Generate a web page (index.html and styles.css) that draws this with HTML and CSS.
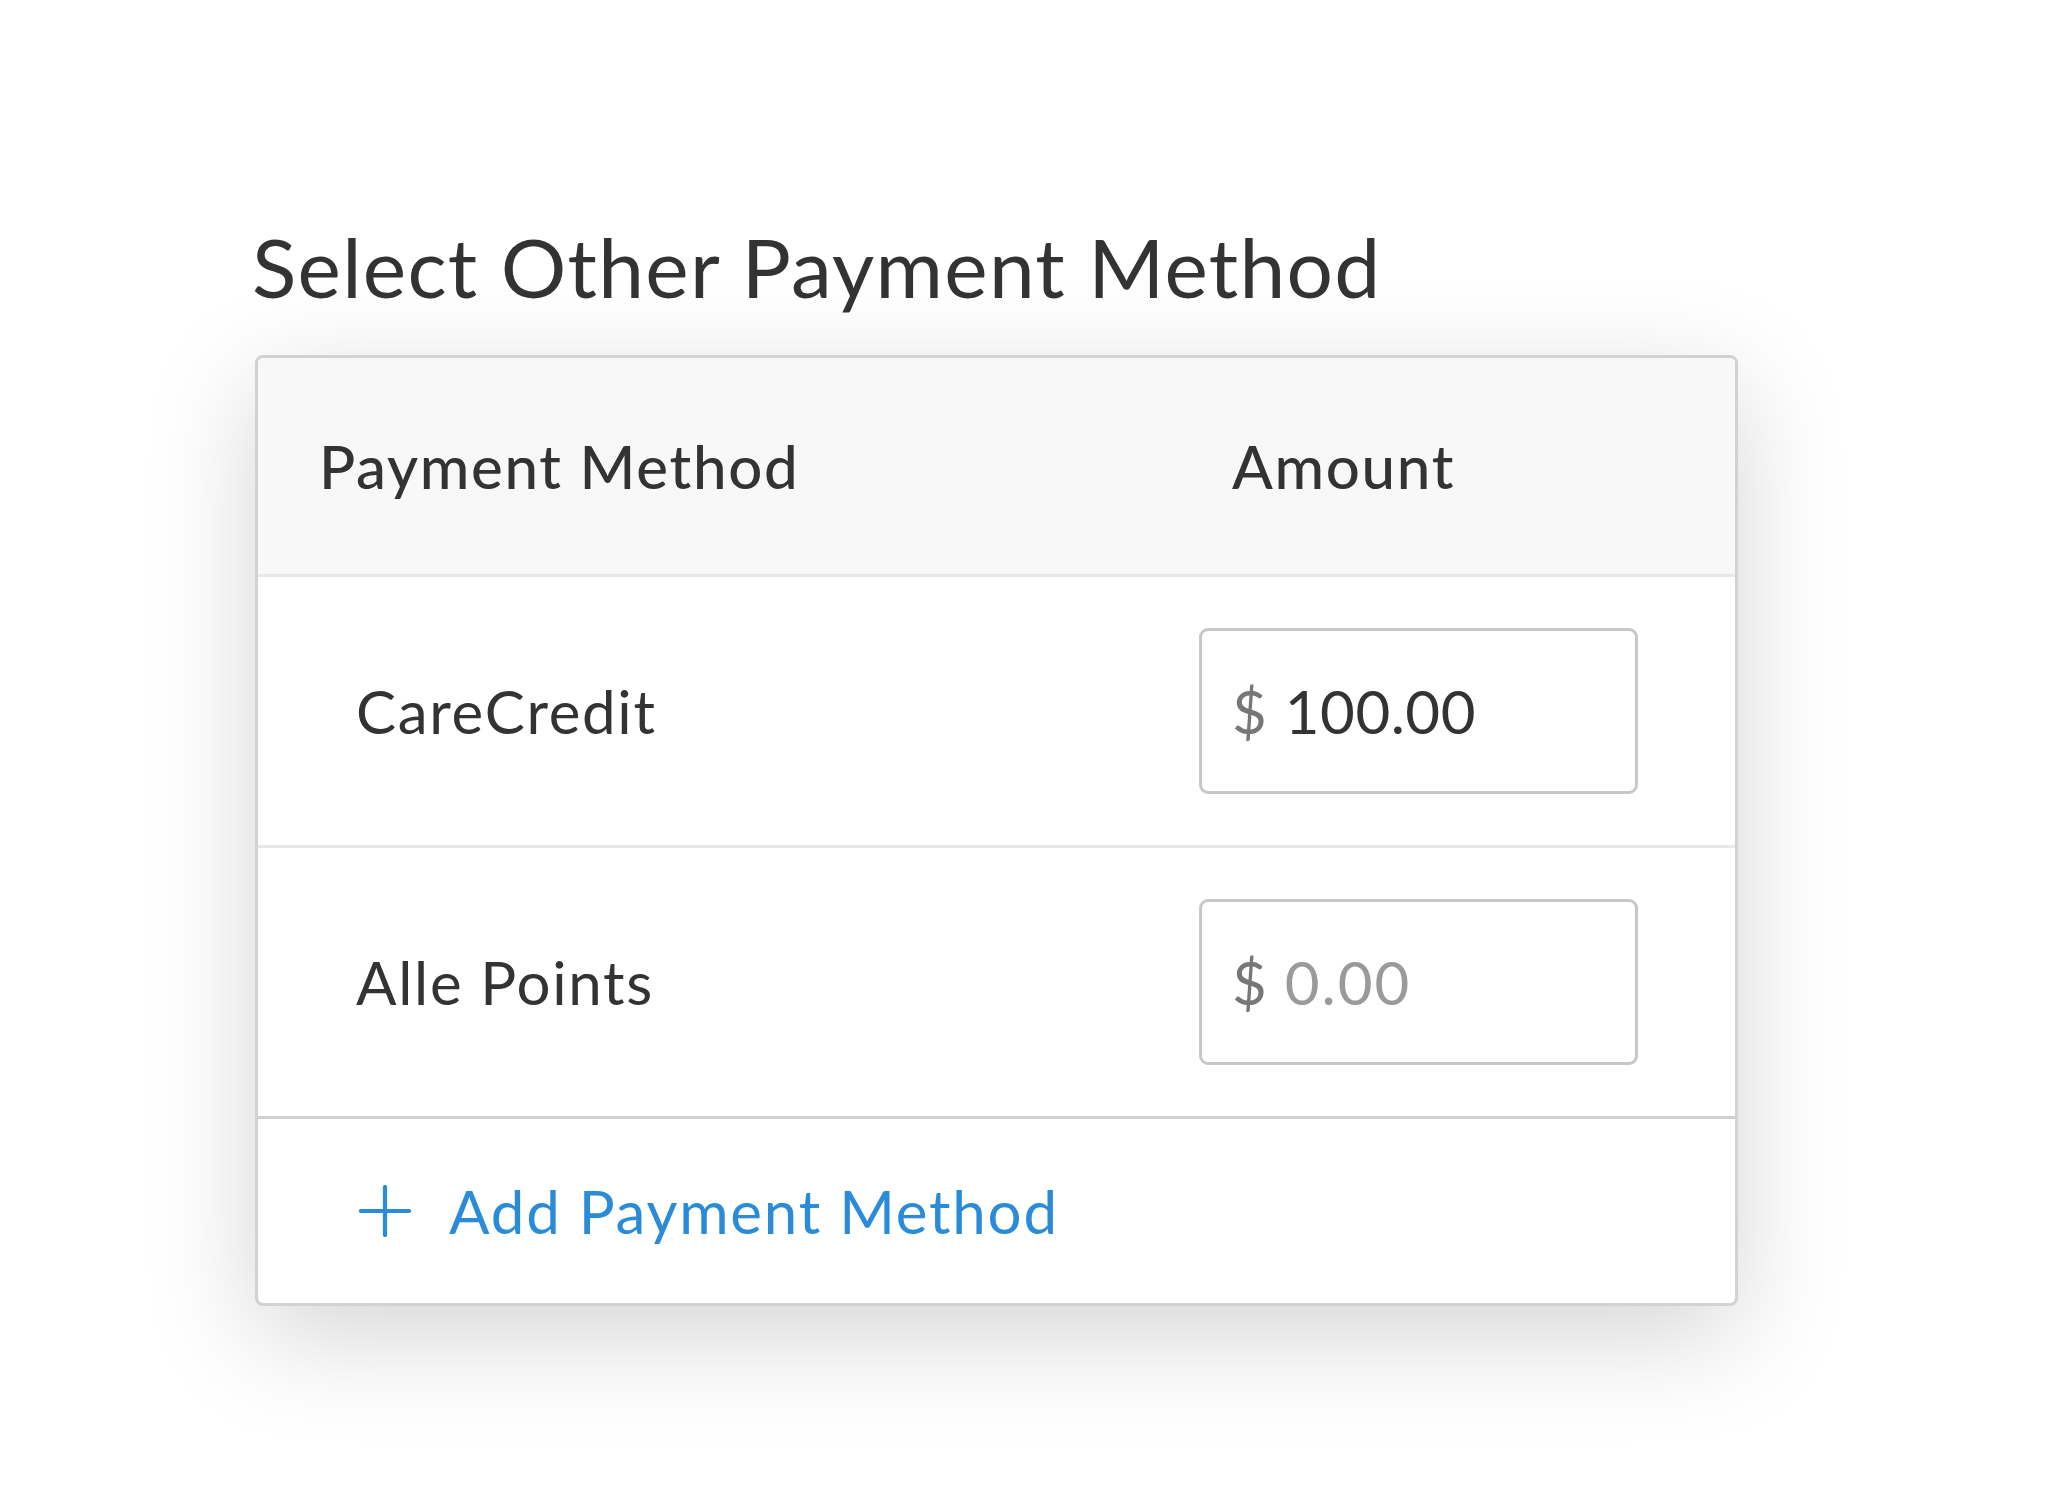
FILE: index.html
```html
<!DOCTYPE html>
<html lang="en">
<head>
<meta charset="utf-8">
<title>Select Other Payment Method</title>
<link rel="stylesheet" href="styles.css">
</head>
<body>
<main class="page">
  <h1 class="title">Select Other Payment Method</h1>
  <section class="card">
    <div class="row head">
      <div class="cell method-head">Payment Method</div>
      <div class="cell amount-head">Amount</div>
    </div>
    <div class="row item">
      <div class="cell label">CareCredit</div>
      <div class="cell">
        <label class="money">
          <span class="currency">$</span>
          <input class="amount" type="text" value="100.00">
        </label>
      </div>
    </div>
    <div class="row item last">
      <div class="cell label">Alle Points</div>
      <div class="cell">
        <label class="money">
          <span class="currency">$</span>
          <input class="amount" type="text" placeholder="0.00">
        </label>
      </div>
    </div>
    <div class="footer">
      <a class="add" href="#">
        <svg class="plus" width="52" height="52" viewBox="0 0 52 52" aria-hidden="true">
          <path d="M26 2 V50 M2 26 H50" stroke="#2a8bd8" stroke-width="4.2" stroke-linecap="round" fill="none"/>
        </svg>
        <span>Add Payment Method</span>
      </a>
    </div>
  </section>
</main>
</body>
</html>
```
FILE: styles.css
```css
html, body {
  margin: 0;
  padding: 0;
  background: #ffffff;
}

body {
  font-family: "Lato", "Noto Sans", sans-serif;
  color: #333333;
  width: 2048px;
  height: 1506px;
  overflow: hidden;
}

.page {
  padding-top: 225px;
  padding-left: 255px;
}

.title {
  margin: 0 0 48px -3px;
  font-size: 82px;
  line-height: 1;
  font-weight: 400;
  color: #333333;
  letter-spacing: 1.3px;
}

.card {
  width: 1477px;
  border: 3px solid #d2d2d2;
  border-radius: 8px;
  background: #ffffff;
  box-shadow: 0 30px 110px rgba(0, 0, 0, 0.17);
  overflow: hidden;
}

.row {
  display: grid;
  grid-template-columns: 1fr 439px;
  align-items: center;
  padding-right: 97px;
}

.head {
  height: 216px;
  background: #f8f8f8;
  border-bottom: 3px solid #e8e8e8;
  font-weight: 500;
}

.cell {
  font-size: 60px;
  line-height: 1;
  letter-spacing: 1.7px;
}

.method-head {
  padding-left: 61px;
}

.amount-head {
  padding-left: 33px;
}

.item {
  height: 268px;
  border-bottom: 3px solid #e8e8e8;
}

.item.last {
  border-bottom: 3px solid #d0d0d0;
}

.label {
  padding-left: 98px;
  color: #333333;
}

.money {
  display: flex;
  align-items: center;
  box-sizing: border-box;
  height: 166px;
  width: 439px;
  border: 3px solid #c8c8c8;
  border-radius: 9px;
  padding-left: 30px;
  background: #ffffff;
}

.currency {
  color: #777777;
  font-size: 60px;
  margin-right: 18px;
  letter-spacing: 0;
}

.amount {
  border: none;
  outline: none;
  padding: 0;
  margin: 0;
  width: 300px;
  font-family: inherit;
  font-size: 60px;
  letter-spacing: 0.5px;
  color: #333333;
  background: transparent;
}

.amount::placeholder {
  color: #9a9a9a;
  letter-spacing: 2px;
}

.footer {
  height: 184px;
  display: flex;
  align-items: center;
  padding-left: 101px;
}

.add {
  display: flex;
  align-items: center;
  gap: 38px;
  color: #2a8bd8;
  text-decoration: none;
  font-size: 60px;
  line-height: 1;
  letter-spacing: 1.8px;
}

.plus {
  display: block;
}
```
